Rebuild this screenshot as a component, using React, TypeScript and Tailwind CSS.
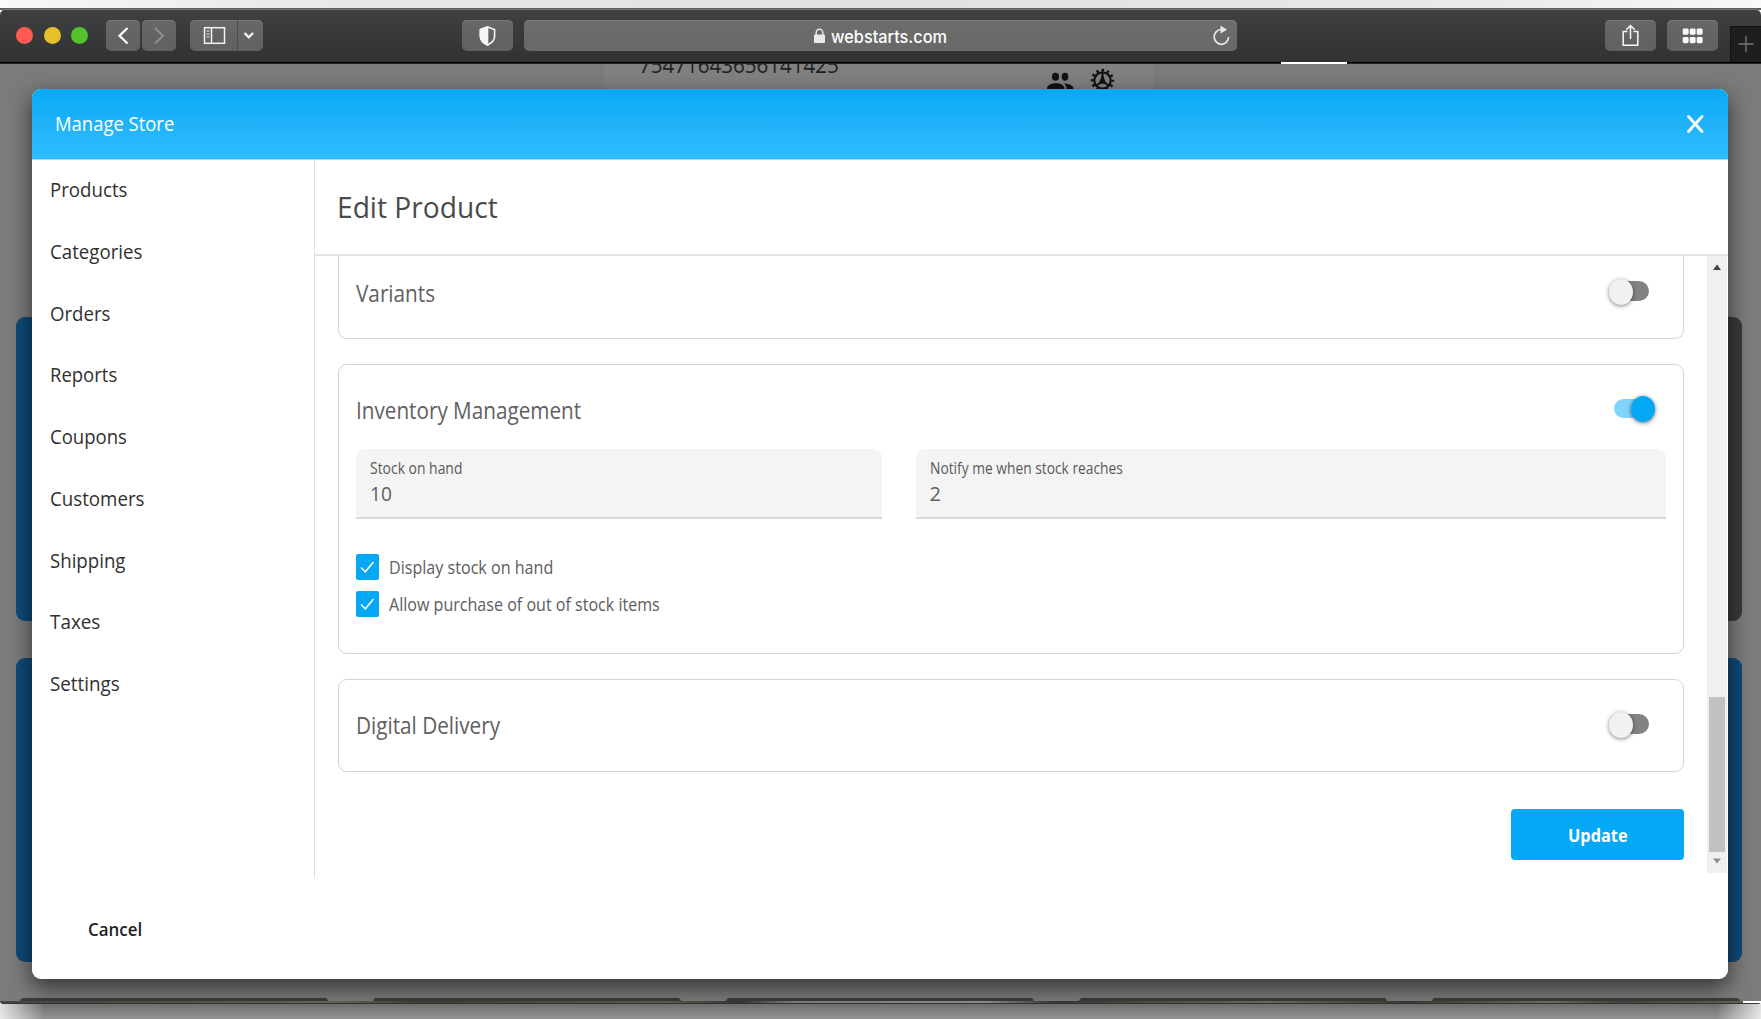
import { useLayoutEffect, useRef, useState } from "react";
import type { ReactNode } from "react";

/** Text squeezed or stretched horizontally to an exact width. */
function Fit({ w, className = "", children }: { w: number; className?: string; children: ReactNode }) {
  const ref = useRef<HTMLSpanElement>(null);
  const [scale, setScale] = useState(0.9);
  useLayoutEffect(() => {
    if (ref.current) setScale(w / ref.current.offsetWidth);
  }, [w]);
  return (
    <span className={`block whitespace-nowrap ${className}`} style={{ width: w }}>
      <span ref={ref} className="inline-block origin-left align-top" style={{ transform: `scaleX(${scale})` }}>
        {children}
      </span>
    </span>
  );
}

const toolButton =
  "flex h-[31px] items-center justify-center rounded-[5px] bg-gradient-to-b from-[#67686a] to-[#5f6061] shadow-[inset_0_1px_0_#777879]";

function Toolbar() {
  return (
    <div className="relative -mt-[1px] flex h-[53px] shrink-0 items-start rounded-t-[6px] border-t border-[#77797a] bg-gradient-to-b from-[#3e4041] to-[#313232] pt-[10px] pl-4">
      <div className="mt-[7px] flex gap-[10.500px]">
        <span className="size-[17px] rounded-full bg-[#ff5b52]" />
        <span className="size-[17px] rounded-full bg-[#e6c02b]" />
        <span className="size-[17px] rounded-full bg-[#53c22b]" />
      </div>
      <button className={`${toolButton} ml-[18px] w-[34px]`}>
        <svg width="34" height="31" fill="none" stroke="#fff" strokeWidth="2.2">
          <path d="M21.5 8 13.5 15.7 21.5 23.5" />
        </svg>
      </button>
      <button className={`${toolButton} ml-[2px] w-[34px]`}>
        <svg width="34" height="31" fill="none" stroke="#8d8e8f" strokeWidth="2">
          <path d="M13 8 21 15.7 13 23.5" />
        </svg>
      </button>
      <div className={`${toolButton} ml-[14px] w-[73px]`}>
        <svg width="73" height="31" fill="none" stroke="#f2f2f2" strokeWidth="1.5">
          <rect x="14.5" y="7.7" width="20" height="15.6" />
          <path d="M21.5 8V23" />
          <path d="M16.5 11h3M16.5 14h3M16.5 17h3" strokeWidth="1" />
          <path d="M47.5 0V31" stroke="#4c4d4e" strokeWidth="1" />
          <path d="M54.5 13 58.8 17.3 63 13" strokeWidth="2.4" />
        </svg>
      </div>
      <button className={`${toolButton} ml-[199px] w-[51px]`}>
        <svg width="51" height="31" fill="none" stroke="#f5f5f5" strokeWidth="1.6">
          <path d="M25.5 7 32.6 9.5V16.5C32.6 20.5 29.5 23 25.5 25 21.5 23 18.4 20.5 18.4 16.5V9.5Z" />
          <path d="M25.5 7V25C21.5 23 18.4 20.5 18.4 16.5V9.5Z" fill="#f5f5f5" />
        </svg>
      </button>
      <div className="ml-[11px] flex h-[31px] w-[713px] items-center rounded-[5px] bg-gradient-to-b from-[#6c6e6d] to-[#676867] pl-[289px] shadow-[inset_0_1px_0_#7c7d7c]">
        <svg width="13" height="16" fill="none">
          <path d="M3.2 8V4.8a3.3 3.6 0 0 1 6.6 0V8" stroke="#e5e5e5" strokeWidth="1.5" />
          <rect x="1" y="6.600" width="11" height="8.400" rx="1" fill="#e9e9e9" />
        </svg>
        <Fit w={116} className="mt-[2px] ml-[5px] font-['Inter'] text-[17px] leading-[22px] font-medium text-white">
          webstarts.com
        </Fit>
        <svg className="ml-[264px]" width="22" height="24" fill="none" stroke="#e8e8e8" strokeWidth="1.700">
          <path d="M10 5.500A7.200 7.400 0 1 0 17.600 13" />
          <path d="M9.500 1.500 16 5.800 9.500 9.500Z" fill="#e8e8e8" stroke="none" />
        </svg>
      </div>
      <button className={`${toolButton} ml-[368px] w-[51px]`}>
        <svg width="51" height="31" fill="none" stroke="#f8f8f8" strokeWidth="1.500">
          <path d="M22.500 11.500H18.200V25.200H32.800V11.500H28.500" />
          <path d="M25.500 19V5.500M21.300 9.800 25.500 5.500 29.700 9.800" />
        </svg>
      </button>
      <button className={`${toolButton} ml-[11px] w-[51px]`}>
        <svg width="51" height="31" fill="#fbfbfb">
          {[15.7, 22.7, 29.7].map((x) => (
            <g key={x}>
              <rect x={x} y="8.500" width="5.900" height="6.200" rx="1.400" />
              <rect x={x} y="17" width="5.900" height="6.200" rx="1.400" />
            </g>
          ))}
        </svg>
      </button>
      <div className="mt-[6px] ml-[12px] flex h-[36px] w-[31px] items-center justify-center border-t border-l border-[#111] bg-[#1e1e1e]">
        <svg width="16" height="18" stroke="#777" strokeWidth="1.300" className="-mt-[2px]">
          <path d="M8 1V17M.5 9H15.500" />
        </svg>
      </div>
    </div>
  );
}

function Backdrop() {
  return (
    <div className="flex h-full flex-col">
      <div className="ml-[604px] flex h-[253px] w-[550px] shrink-0 bg-[#808080]">
        <Fit w={200} className="-mt-[15px] ml-[35px] h-[30px] text-[22px] leading-[30px] text-[#1f1f1f]">
          75471643656141425
        </Fit>
        <svg className="ml-[208px]" width="27" height="28" fill="#111">
          <ellipse cx="8.500" cy="12.800" rx="3.600" ry="4" />
          <ellipse cx="18" cy="12.800" rx="3.300" ry="4" />
          <path d="M0 28V24.500C0 21 5 19.300 9 19.300S17.500 21 17.500 24.500V28ZM19.500 28V24.500C19.500 22 18.500 20.500 17 19.400 22 19.400 26.500 21.500 26.500 24.500V28Z" />
        </svg>
        <svg className="ml-[16px]" width="26" height="30" fill="none" stroke="#111">
          <circle cx="12.500" cy="16.500" r="8.200" strokeWidth="2.200" />
          <circle cx="12.500" cy="16.500" r="10.300" strokeWidth="2.800" strokeDasharray="2.400 2.993" strokeDashoffset="1.200" />
          <path d="M12.500 8V16M11 18 6 22M14 18 19 22" strokeWidth="2" />
          <path d="M12.500 10 16.300 19.800H8.700Z" fill="#111" stroke="none" />
        </svg>
      </div>
      <div className="mr-[19px] ml-4 flex h-[304px] shrink-0 justify-between">
        <div className="w-[400px] rounded-[9px] bg-[#0f4a78]" />
        <div className="w-[400px] rounded-[9px] bg-[#393939]" />
      </div>
      <div className="mt-[37px] mr-[19px] ml-4 flex h-[304px] shrink-0 justify-between">
        <div className="w-[400px] rounded-[9px] bg-[#0f4a78]" />
        <div className="w-[400px] rounded-[9px] bg-[#0f4a78]" />
      </div>
      <div className="mt-[36px] ml-5 flex h-1 shrink-0 gap-[45px]">
        <div className="w-[308px] rounded-t bg-[#3b3b3b]" />
        <div className="w-[308px] rounded-t bg-[#3b3b3b]" />
        <div className="w-[308px] rounded-t bg-[#3b3b3b]" />
        <div className="w-[308px] rounded-t bg-[#3b3b3b]" />
        <div className="w-[308px] rounded-t bg-[#3b3b3b]" />
      </div>
    </div>
  );
}

function Toggle({ on = false }: { on?: boolean }) {
  return on ? (
    <div className="relative h-[19px] w-[38px] rounded-full bg-[#80d4fb]">
      <span className="absolute -top-[3px] left-[17px] h-[26px] w-[24px] rounded-[50%] bg-[#05a8f5] shadow-[0_1px_4px_rgba(0,0,0,0.55)]" />
    </div>
  ) : (
    <div className="relative h-[20px] w-[36px] rounded-full bg-[#838383]">
      <span className="absolute -top-[2px] -left-[4px] h-[26px] w-[24px] rounded-[50%] bg-[#f1f1f1] shadow-[0_1px_4px_rgba(0,0,0,0.5)]" />
    </div>
  );
}

function Field({ label, labelWidth, value, valueWidth, className }: {
  label: string;
  labelWidth: number;
  value: string;
  valueWidth: number;
  className: string;
}) {
  return (
    <div className={`h-[70px] rounded-t-[9px] border-b-2 border-[#d8d8d8] bg-[#f4f4f4] pt-[8px] pl-[13.500px] ${className}`}>
      <Fit w={labelWidth} className="h-[23px] text-[15.500px] leading-[23px] text-[#5a5a5a]">{label}</Fit>
      <Fit w={valueWidth} className="mt-[1px] h-[26px] text-[20px] leading-[26px] text-[#606060]">{value}</Fit>
    </div>
  );
}

function Check({ label, width }: { label: string; width: number }) {
  return (
    <label className="flex h-[26px] items-center">
      <span className="flex h-[26px] w-[23px] items-center justify-center rounded-[2px] bg-[#05a8f5]">
        <svg width="17" height="16" fill="none" stroke="#fff" strokeWidth="1.600">
          <path d="M2 8.500 6.300 12.800 14.500 3" />
        </svg>
      </span>
      <Fit w={width} className="ml-[9.500px] text-[18.500px] leading-[26px] text-[#5d5d5d]">{label}</Fit>
    </label>
  );
}

const nav: [string, number][] = [
  ["Products", 77.5],
  ["Categories", 92.5],
  ["Orders", 60.5],
  ["Reports", 67.5],
  ["Coupons", 77],
  ["Customers", 94.5],
  ["Shipping", 75.5],
  ["Taxes", 50],
  ["Settings", 69.5],
];

function Modal() {
  return (
    <div className="absolute top-[25px] left-[32px] flex h-[890px] w-[1696px] flex-col overflow-hidden rounded-[9px] bg-white">
      <header className="flex h-[71px] shrink-0 items-center justify-between border-b border-[#9de0ff] bg-gradient-to-b from-[#05a9f5] to-[#2fbcff] pr-[23px] pl-[23px]">
        <Fit w={119} className="text-[20px] leading-[28px] text-white">Manage Store</Fit>
        <svg width="19" height="20" stroke="#fff" strokeWidth="2.800" strokeLinecap="round">
          <path d="M2.500 2.500 16 17.500M16 2.500 2.500 17.500" />
        </svg>
      </header>
      <div className="flex h-[718px] shrink-0">
        <nav className="w-[283px] shrink-0 border-r border-[#e0e0e0] pl-[17.500px]">
          {nav.map(([name, w]) => (
            <div key={name} className="flex h-[61.750px] items-center pb-[1.500px]">
              <Fit w={w} className="text-[20px] leading-[28px] text-[#303030]">{name}</Fit>
            </div>
          ))}
        </nav>
        <main className="flex flex-1 flex-col">
          <div className="flex h-[96px] shrink-0 items-center border-b-2 border-[#e4e4e4] pl-[22px]">
            <Fit w={160.5} className="text-[30px] leading-[40px] text-[#4a4a4a]">Edit Product</Fit>
          </div>
          <div className="flex h-[617px] w-[1412px]">
            <div className="w-[1369px] shrink-0 pl-[23px]">
              <section className="flex h-[83px] items-start justify-between rounded-b-[9px] border border-t-0 border-[#d4d4d4] pr-[34px] pl-[17px]">
                <Fit w={79.5} className="mt-[20px] text-[24px] leading-[34px] text-[#616161]">Variants</Fit>
                <div className="mt-[25px]"><Toggle /></div>
              </section>
              <section className="mt-[25px] h-[290px] rounded-[9px] border border-[#d4d4d4] px-[17px]">
                <div className="flex h-[84px] justify-between pr-[14px]">
                  <Fit w={225} className="mt-[28px] text-[24px] leading-[34px] text-[#616161]">Inventory Management</Fit>
                  <div className="mt-[34px]"><Toggle on /></div>
                </div>
                <div className="flex gap-[34px]">
                  <Field label="Stock on hand" labelWidth={92.5} value="10" valueWidth={22} className="w-[526px]" />
                  <Field label="Notify me when stock reaches" labelWidth={193} value="2" valueWidth={11} className="flex-1" />
                </div>
                <div className="mt-[35px] flex flex-col gap-[11px]">
                  <Check label="Display stock on hand" width={164.5} />
                  <Check label="Allow purchase of out of stock items" width={271} />
                </div>
              </section>
              <section className="mt-[25px] flex h-[93px] justify-between rounded-[9px] border border-[#d4d4d4] pr-[34px] pl-[17px]">
                <Fit w={144} className="mt-[28px] text-[24px] leading-[34px] text-[#616161]">Digital Delivery</Fit>
                <div className="mt-[34px]"><Toggle /></div>
              </section>
              <div className="mt-[37px] flex justify-end">
                <button className="flex h-[51px] w-[173px] items-center justify-center rounded-[4px] bg-[#05a8f5]">
                  <Fit w={60} className="text-left text-[18.500px] leading-[26px] font-bold text-white">Update</Fit>
                </button>
              </div>
            </div>
            <div className="ml-[23px] flex w-[20px] flex-col items-center bg-[#f0f0f0]">
              <svg className="mt-[8px]" width="10" height="6" fill="#444"><path d="M1 6 5 0.500 9 6Z" /></svg>
              <div className="mt-[427px] h-[155px] w-4 bg-[#c1c1c1]" />
              <svg className="mt-[6px]" width="10" height="6" fill="#8f8f8f"><path d="M1 0.500 5 5.500 9 0.500Z" /></svg>
            </div>
          </div>
        </main>
      </div>
      <footer className="pt-[38px] pl-[56px]">
        <Fit w={54} className="text-[18.500px] leading-[26px] font-semibold text-[#1f1f1f]">Cancel</Fit>
      </footer>
    </div>
  );
}

export default function App() {
  return (
    <div className="flex h-[1019px] w-[1761px] flex-col overflow-hidden bg-white font-['Open_Sans',sans-serif]">
      <div className="h-[10px] shrink-0 border-b-2 border-[#5b5c5c] bg-[radial-gradient(ellipse_1000px_60px_at_50%_100%,#e0e0e0_0%,#e9e9e9_60%,#ffffff_100%)]" />
      <Toolbar />
      <div className="flex h-[2px] shrink-0 items-stretch justify-end border-t border-black bg-[#222]" />
      <div className="relative h-[937px] shrink-0">
        <div className="absolute -top-[2px] left-[1281px] h-[2px] w-[66px] bg-white" />
        <div className="relative h-full overflow-hidden bg-[#7b7b7b]">
          <Backdrop />
          <div className="absolute top-[25px] left-[32px] h-[890px] w-[1696px] rounded-[9px] shadow-[0_8px_22px_rgba(0,0,0,0.6)]" />
          <Modal />
        </div>
      </div>
      <div className="flex h-[3px] shrink-0 justify-end rounded-b border-b border-[#333] bg-[linear-gradient(90deg,#444_0%,#4a4a40_6%,#66624e_19%,#3b3d33_24%,#5a5c48_38%,#333_42%,#777_45%,#8a8a8a_56%,#33352f_60%,#6b6851_72%,#353a30_80%,#6b6a52_88%,#45413a_92%,#66644e_100%)]">
        <div className="w-[18px] bg-white" />
      </div>
      <div className="flex-1 bg-[linear-gradient(90deg,#ffffffcc_0%,#ffffff00_2.500%,#ffffff00_97.500%,#ffffffcc_100%),linear-gradient(180deg,#6d6d6d,#949494)]" />
    </div>
  );
}
